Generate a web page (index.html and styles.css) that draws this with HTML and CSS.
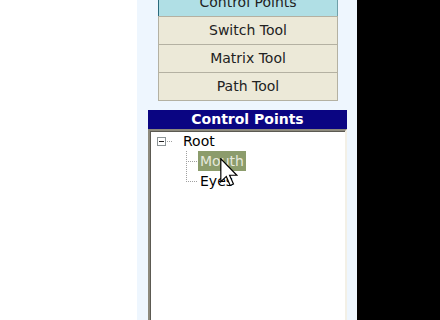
FILE: index.html
```html
<!DOCTYPE html>
<html lang="en">
<head>
    <meta charset="UTF-8">
    <title>Control Points</title>
    <link rel="stylesheet" href="styles.css">
</head>
<body>
    <div class="page">
        <div class="blank"></div>

        <div class="sidebar">
            <div class="tools">
                <div class="tool active">Control Points</div>
                <div class="tool">Switch Tool</div>
                <div class="tool">Matrix Tool</div>
                <div class="tool">Path Tool</div>
            </div>

            <div class="points">
                <div class="points-title">Control Points</div>
                <div class="tree">
                    <div class="node">
                        <span class="toggle"></span>
                        <span class="stub"></span>
                        <span class="label">Root</span>
                    </div>
                    <div class="children">
                        <div class="node child">
                            <span class="branch"></span>
                            <span class="label selected">Mouth</span>
                        </div>
                        <div class="node child last">
                            <span class="branch"></span>
                            <span class="label">Eyes</span>
                        </div>
                    </div>
                </div>
            </div>

            <svg class="cursor" width="18" height="29" viewBox="0 0 12 19.5">
                <path d="M0.5 0.5 L0.5 16 L4.2 12.4 L6.8 18.5 L9 17.5 L6.4 11.6 L11.3 11.6 Z" fill="#fff" stroke="#000" stroke-width="0.8" stroke-linejoin="miter"/>
            </svg>
        </div>

        <div class="void"></div>
    </div>
</body>
</html>
```

FILE: styles.css
```css
body {
    margin: 0;
    font-family: "DejaVu Sans", Verdana, sans-serif;
    font-size: 14px;
    overflow: hidden;
}
.page {
    display: flex;
    height: 320px;
}
.blank {
    width: 137px;
    background: #fff;
}
.sidebar {
    position: relative;
    width: 220px;
    background: #eef6fe;
    display: flex;
    flex-direction: column;
    padding-left: 11px;
    box-sizing: border-box;
}
.void {
    flex: 1;
    background: #000;
}

/* tool buttons */
.tools {
    width: 180px;
    margin: -12px 0 0 10px;
}
.tool {
    height: 27px;
    line-height: 27px;
    text-align: center;
    color: #222;
    background: #ece9d8;
    border: 1px solid #b4b1a2;
}
.tool + .tool {
    margin-top: -1px;
}
.tool.active {
    background: #b0dfe5;
    border-color: #6f9fa8;
    border-left-color: #2b6a7c;
}

/* control points panel */
.points {
    margin-top: 9px;
    width: 199px;
    flex: 1;
    display: flex;
    flex-direction: column;
}
.points-title {
    height: 19px;
    line-height: 19px;
    background: #0a0582;
    color: #fff;
    font-weight: bold;
    text-align: center;
}
.tree {
    flex: 1;
    background: #fff;
    border-top: 2px solid #8c897c;
    border-left: 2px solid #8c897c;
    border-right: 2px solid #f3f0e6;
    box-shadow: inset 1px 1px 0 #5c5a52;
}
.node {
    display: flex;
    align-items: center;
    height: 20px;
}
.toggle {
    width: 9px;
    height: 9px;
    margin-left: 7px;
    box-sizing: border-box;
    border: 1px solid #8c9496;
    background: linear-gradient(#222, #222) center / 5px 1px no-repeat, #fff;
}
.stub {
    width: 6px;
    height: 1px;
    margin-left: 1px;
    background: repeating-linear-gradient(to right, #a0a0a0 0 1px, transparent 1px 2px);
}
.label {
    margin-left: 8px;
    padding: 0 2px;
    line-height: 20px;
    color: #000;
}
.children {
    padding-left: 36px;
}
.child .label {
    margin-left: 0;
}
.branch {
    align-self: stretch;
    width: 12px;
    background:
        repeating-linear-gradient(to bottom, #a0a0a0 0 1px, transparent 1px 2px) left top / 1px 100% no-repeat,
        repeating-linear-gradient(to right, #a0a0a0 0 1px, transparent 1px 2px) left 10px / 100% 1px no-repeat;
}
.child.last .branch {
    background:
        repeating-linear-gradient(to bottom, #a0a0a0 0 1px, transparent 1px 2px) left top / 1px 11px no-repeat,
        repeating-linear-gradient(to right, #a0a0a0 0 1px, transparent 1px 2px) left 10px / 100% 1px no-repeat;
}
.label.selected {
    background: #8c9c6c;
    color: #e6e8dc;
}

.cursor {
    position: absolute;
    left: 83px;
    top: 158px;
}
```
